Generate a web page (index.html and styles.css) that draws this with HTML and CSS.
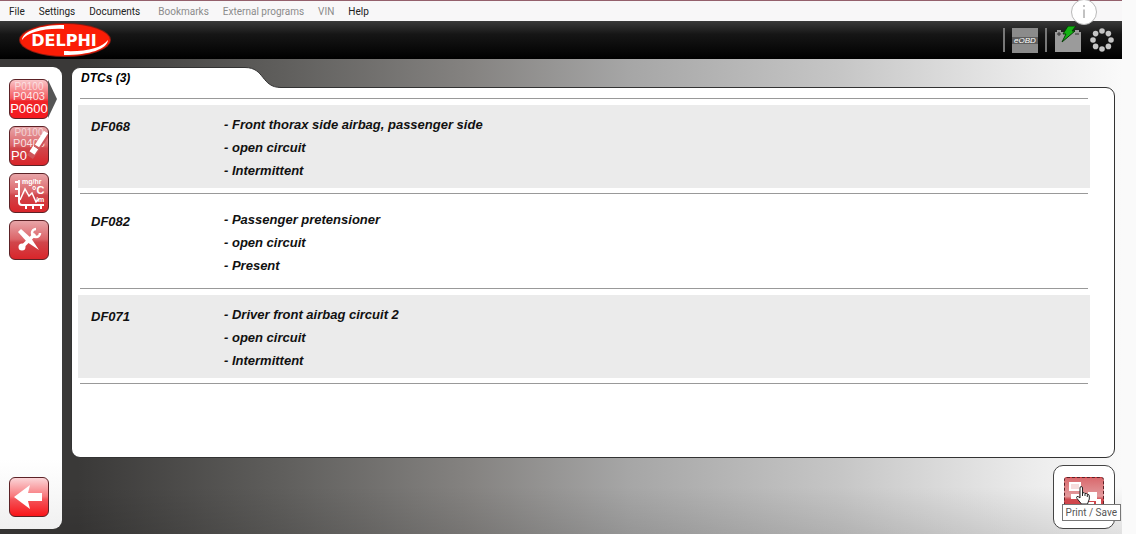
FILE: index.html
```html
<!DOCTYPE html>
<html lang="en">
<head>
    <meta charset="UTF-8">
    <meta name="viewport" content="width=device-width, initial-scale=1.0">
    <title>DTCs</title>
    <link rel="stylesheet" href="styles.css">
</head>
<body>
    <div class="app">
        <nav class="menu">
            <button type="button">File</button>
            <button type="button">Settings</button>
            <button type="button" class="wide">Documents</button>
            <button type="button" disabled>Bookmarks</button>
            <button type="button" disabled>External programs</button>
            <button type="button" disabled>VIN</button>
            <button type="button">Help</button>
        </nav>

        <header class="header">
            <svg class="logo" width="94" height="36" viewBox="0 0 94 36" role="img" aria-label="Delphi">
                <ellipse cx="47" cy="18" rx="46" ry="17" fill="#8f1a10"/>
                <ellipse cx="47" cy="18" rx="45" ry="16" fill="#fb1d06"/>
                <path d="M4 18C5 9 22 3 46 3V7C26 6 10 10 4 18z" fill="#fff"/>
                <path d="M90 18C89 27 72 33 46 33V29C68 30 84 26 90 18z" fill="#fff"/>
                <text x="46" y="24" text-anchor="middle">DELPHI</text>
            </svg>
            <div class="status">
                <span class="separator"></span>
                <span class="eobd">eOBD</span>
                <span class="separator"></span>
                <svg class="battery" width="28" height="28" viewBox="0 0 28 28" aria-hidden="true">
                    <path d="M1 6h2V4h4v2h14V4h4v2h2v20H1z" fill="#9b9b9b"/>
                    <path d="M3 8h4M5 6v4M21 8h4" stroke="#333" stroke-width="1"/>
                    <path d="M14 0h8l-4 5h3L8 16l4-8H9z" fill="#13b313" stroke="#073d07"/>
                </svg>
                <svg class="spinner" width="26" height="26" viewBox="0 0 26 26" fill="#c4c4c4" aria-hidden="true">
                    <circle cx="13" cy="4" r="2.800"/>
                    <circle cx="19.400" cy="6.600" r="2.800"/>
                    <circle cx="22" cy="13" r="2.800"/>
                    <circle cx="19.400" cy="19.400" r="2.800"/>
                    <circle cx="13" cy="22" r="2.800"/>
                    <circle cx="6.600" cy="19.400" r="2.800"/>
                    <circle cx="4" cy="13" r="2.800"/>
                    <circle cx="6.600" cy="6.600" r="2.800"/>
                </svg>
            </div>
            <button type="button" class="info" aria-label="Info">
                <svg width="28" height="28" viewBox="0 0 28 28">
                    <circle cx="14" cy="14" r="12.500" fill="#fff" stroke="#b9b9b9"/>
                    <path d="M14 7v2M14 11.500V20" stroke="#c2c2c2" stroke-width="2"/>
                </svg>
            </button>
        </header>

        <div class="workspace">
            <aside class="sidebar">
                <button type="button" class="tool active" aria-label="Read DTCs">
                    <svg viewBox="0 0 38 38" class="codes">
                        <text x="19" y="10" font-size="10" opacity=".6" text-anchor="middle">P0100</text>
                        <text x="19" y="20" font-size="11" opacity=".85" text-anchor="middle">P0403</text>
                        <text x="19" y="33" font-size="13" text-anchor="middle">P0600</text>
                    </svg>
                </button>
                <button type="button" class="tool dim" aria-label="Erase DTCs">
                    <svg viewBox="0 0 38 38" class="codes">
                        <text x="19" y="9" font-size="10" opacity=".6" text-anchor="middle">P0100</text>
                        <text x="19" y="20" font-size="11" opacity=".8" text-anchor="middle">P0403</text>
                        <text x="1" y="33" font-size="13">P0</text>
                        <path d="M20 30L37 6" stroke="#cf555a" stroke-width="7"/>
                        <path d="M27 19L36 5" stroke="#fff" stroke-width="5"/>
                        <path d="M22 26L26 20" stroke="#fff" stroke-width="6"/>
                        <path d="M24 19l6 4" stroke="#c34a4a"/>
                    </svg>
                </button>
                <button type="button" class="tool dim" aria-label="Real time data">
                    <svg viewBox="0 0 38 38" fill="none" stroke="#fff">
                        <path d="M9 6V28Q9 31 12 31H34" stroke-width="2"/>
                        <path d="M5 8h4M5 15h4M5 22h4M16 31v4M23 31v4M31 31v4" stroke-width="2"/>
                        <path d="M10 26L15 15L19 22L22 19L26 28L29 25" stroke-width="1.500"/>
                        <text x="12" y="10" font-size="7">mg/hr</text>
                        <text x="22" y="20" font-size="11">°C</text>
                        <text x="26" y="28" font-size="7">/m</text>
                    </svg>
                </button>
                <button type="button" class="tool dim" aria-label="Adjustments">
                    <svg viewBox="0 0 38 38" fill="none" stroke="#fff">
                        <path d="M12 26L25 13" stroke-width="3.500"/>
                        <path d="M30 12A4 4 0 1 1 26 8" stroke-width="2.500"/>
                        <circle cx="12" cy="26" r="3.500" fill="#fff" stroke="none"/>
                        <path d="M11 8L21 17L29 29L17 21L8 11z" fill="#fff" stroke="none"/>
                    </svg>
                </button>
                <button type="button" class="tool back" aria-label="Back">
                    <svg viewBox="0 0 38 38">
                        <path d="M4 19L20 7L18 15H32V23H18L20 31z" fill="#fff"/>
                    </svg>
                </button>
            </aside>

            <main class="main">
                <section class="panel">
                    <div class="tabs">
                        <h1 class="tab">DTCs (3)</h1>
                        <svg class="curve" width="36" height="21" viewBox="0 0 36 21" aria-hidden="true">
                            <path d="M0 .500C20 .500 16 20.500 36 20.500V21H0z" fill="#fff"/>
                            <path d="M0 .500C20 .500 16 20.500 36 20.500" fill="none" stroke="#333"/>
                        </svg>
                    </div>
                    <div class="content">
                        <table class="dtcs">
                            <tbody>
                                <tr>
                                    <th scope="row">DF068</th>
                                    <td>- Front thorax side airbag, passenger side<br>- open circuit<br>- Intermittent</td>
                                </tr>
                                <tr>
                                    <th scope="row">DF082</th>
                                    <td>- Passenger pretensioner<br>- open circuit<br>- Present</td>
                                </tr>
                                <tr>
                                    <th scope="row">DF071</th>
                                    <td>- Driver front airbag circuit 2<br>- open circuit<br>- Intermittent</td>
                                </tr>
                            </tbody>
                        </table>
                    </div>
                </section>

                <footer class="actions">
                    <div class="print-box">
                        <button type="button" class="tool print" aria-labelledby="print-tip">
                            <svg viewBox="0 0 38 38">
                                <path d="M4 4h12v9H4zM6 16h8v5H6zM23 14h9v9h-9zM19 24h10v4h-10zM31 21h5v6h-5z" fill="#fff"/>
                                <path d="M6 6h8v5H6z" fill="#f6dcdc"/>
                            </svg>
                        </button>
                        <svg class="hand" width="14" height="19" viewBox="0 0 14 19" aria-hidden="true">
                            <path d="M4 11V2q0-1.500 1.200-1.500T6.500 2V7q2-1 2.500.500 2-.500 2.300.800 2-.200 2 1.700V13L11.500 18H5.500L1 12.500q-1-1.500 0-2T4 12z" fill="#fff" stroke="#222"/>
                            <path d="M6.500 7v3M9 7.500V10M11.300 8.500V11" stroke="#222"/>
                        </svg>
                        <span class="tooltip" id="print-tip" role="tooltip">Print / Save</span>
                    </div>
                </footer>
            </main>
        </div>
    </div>
</body>
</html>
```
FILE: styles.css
```css
* {
    box-sizing: border-box;
}

body {
    margin: 0;
    padding-right: 14px;
    background: #fafafa;
    font-family: "Liberation Sans", Arial, sans-serif;
}

button {
    padding: 0;
    border: none;
    background: none;
    font: inherit;
    cursor: pointer;
}

svg {
    display: block;
}

.app {
    display: flex;
    flex-direction: column;
    min-height: 100vh;
}

/* menu bar */
.menu {
    display: flex;
    gap: 14px;
    height: 21px;
    padding-left: 9px;
    border-top: 1px solid #94606c;
    background: #f8f7f8;
    font-family: Roboto, "Segoe UI", sans-serif;
    font-size: 10px;
}

.menu button {
    color: #222;
}

.menu button:disabled {
    color: #8b8b8b;
}

.menu .wide {
    margin-right: 4px;
}

/* header */
.header {
    position: relative;
    display: flex;
    justify-content: space-between;
    align-items: center;
    height: 38px;
    padding: 0 7px 0 18px;
    background: linear-gradient(#3a3a3a, #161616 35%, #000);
}

.logo text {
    fill: #fff;
    font-family: "DejaVu Sans", Verdana, sans-serif;
    font-size: 16px;
    font-weight: bold;
}

.status {
    display: flex;
    align-items: center;
    gap: 7px;
}

.separator {
    width: 2px;
    height: 24px;
    background: #777;
}

.eobd {
    width: 26px;
    height: 25px;
    background: linear-gradient(#8b8b8b 36%, #5e5e5e 36%, #5e5e5e 64%, #8b8b8b 64%);
    color: #fff;
    font-size: 8px;
    font-style: italic;
    line-height: 25px;
    text-align: center;
}

.info {
    position: absolute;
    top: -23px;
    right: 24px;
}

/* workspace */
.workspace {
    flex: 1;
    display: flex;
    gap: 9px;
    padding: 8px 7px 5px 0;
    background:
        linear-gradient(transparent 90%, rgba(0, 0, 0, 0.1)),
        linear-gradient(to right, #3a3938 7%, #5f5e5c 25%, #858381 42%, #a6a6a6 56%, #c6c6c6 75%, #ececec 92%, #fafafa);
}

.sidebar {
    display: flex;
    flex-direction: column;
    gap: 7px;
    width: 62px;
    padding: 12px 0 12px 9px;
    border-radius: 0 9px 9px 0;
    background: linear-gradient(#fff 85%, #f0f0f0);
}

.tool {
    position: relative;
    width: 40px;
    height: 40px;
    border: 1px solid #5c2226;
    border-radius: 6px;
    background: linear-gradient(#f9c6c9, #f4595e 48%, #ef2328 56%, #f51a1f);
}

.tool text {
    fill: #fff;
    stroke: none;
    font-weight: bold;
}

.tool .codes text {
    font-weight: normal;
}

.tool.dim {
    background: linear-gradient(#e8a5a8, #dc6569 48%, #d1464b 56%, #d9252a);
}

.tool.active::after {
    content: "";
    position: absolute;
    top: 0;
    left: 100%;
    width: 9px;
    height: 38px;
    background: #555;
    clip-path: polygon(0 0, 100% 50%, 0 100%);
}

.tool.back {
    margin-top: auto;
    background: linear-gradient(#fbd5d8, #f8787c 48%, #f4555a 56%, #f91519);
}

.main {
    flex: 1;
    display: flex;
    flex-direction: column;
    gap: 7px;
}

.panel {
    flex: 1;
    display: flex;
    flex-direction: column;
}

.tabs {
    position: relative;
    display: flex;
    margin-bottom: -1px;
}

.tab {
    width: 174px;
    height: 21px;
    margin: 0;
    padding-left: 9px;
    border: solid #333;
    border-width: 1px 0 0 1px;
    border-radius: 9px 0 0 0;
    background: #fff;
    font-size: 12px;
    font-style: italic;
    line-height: 20px;
}

.content {
    flex: 1;
    padding: 10px 24px 10px 6px;
    border: 1px solid #333;
    border-radius: 0 9px 9px 9px;
    background: #fff;
}

/* each row draws its own rule above the shaded block */
.dtcs {
    width: 100%;
    border-collapse: collapse;
    color: #111;
    font-size: 13px;
    font-style: italic;
    font-weight: bold;
    line-height: 23px;
    text-align: left;
}

.dtcs tr {
    --rule: linear-gradient(#999, #999);
    --shade: linear-gradient(#ebebeb, #ebebeb);
    background: var(--rule) center top / calc(100% - 4px) 1px no-repeat;
}

.dtcs tr:nth-child(odd) {
    background:
        var(--rule) center top / calc(100% - 4px) 1px no-repeat,
        var(--shade) 0 7px / 100% 83px no-repeat;
}

.dtcs tr:last-child {
    background:
        var(--rule) center top / calc(100% - 4px) 1px no-repeat,
        var(--rule) center bottom / calc(100% - 4px) 1px no-repeat,
        var(--shade) 0 7px / 100% 83px no-repeat;
}

.dtcs th {
    width: 146px;
    padding: 17px 0 0 13px;
    vertical-align: top;
}

.dtcs td {
    padding: 15px 0 11px;
}

.dtcs tr:last-child td {
    padding-bottom: 12px;
}

/* bottom actions */
.actions {
    display: flex;
    justify-content: flex-end;
}

.print-box {
    position: relative;
    width: 62px;
    height: 64px;
    padding: 11px 10px;
    border: 1px solid #444;
    border-radius: 10px;
    background: #fff;
}

.print {
    border: 1px dashed #5c2226;
    border-radius: 3px;
    background: linear-gradient(#d96a6e, #e39a9d 48%, #cf4a50 56%, #d4343a);
}

.hand {
    position: absolute;
    top: 20px;
    left: 22px;
}

.tooltip {
    position: absolute;
    top: 38px;
    right: -7px;
    padding: 0 3px;
    border: 1px solid #777;
    background: #fff;
    color: #555;
    font-family: Roboto, "Segoe UI", sans-serif;
    font-size: 10px;
    line-height: 15px;
    white-space: nowrap;
}
```
